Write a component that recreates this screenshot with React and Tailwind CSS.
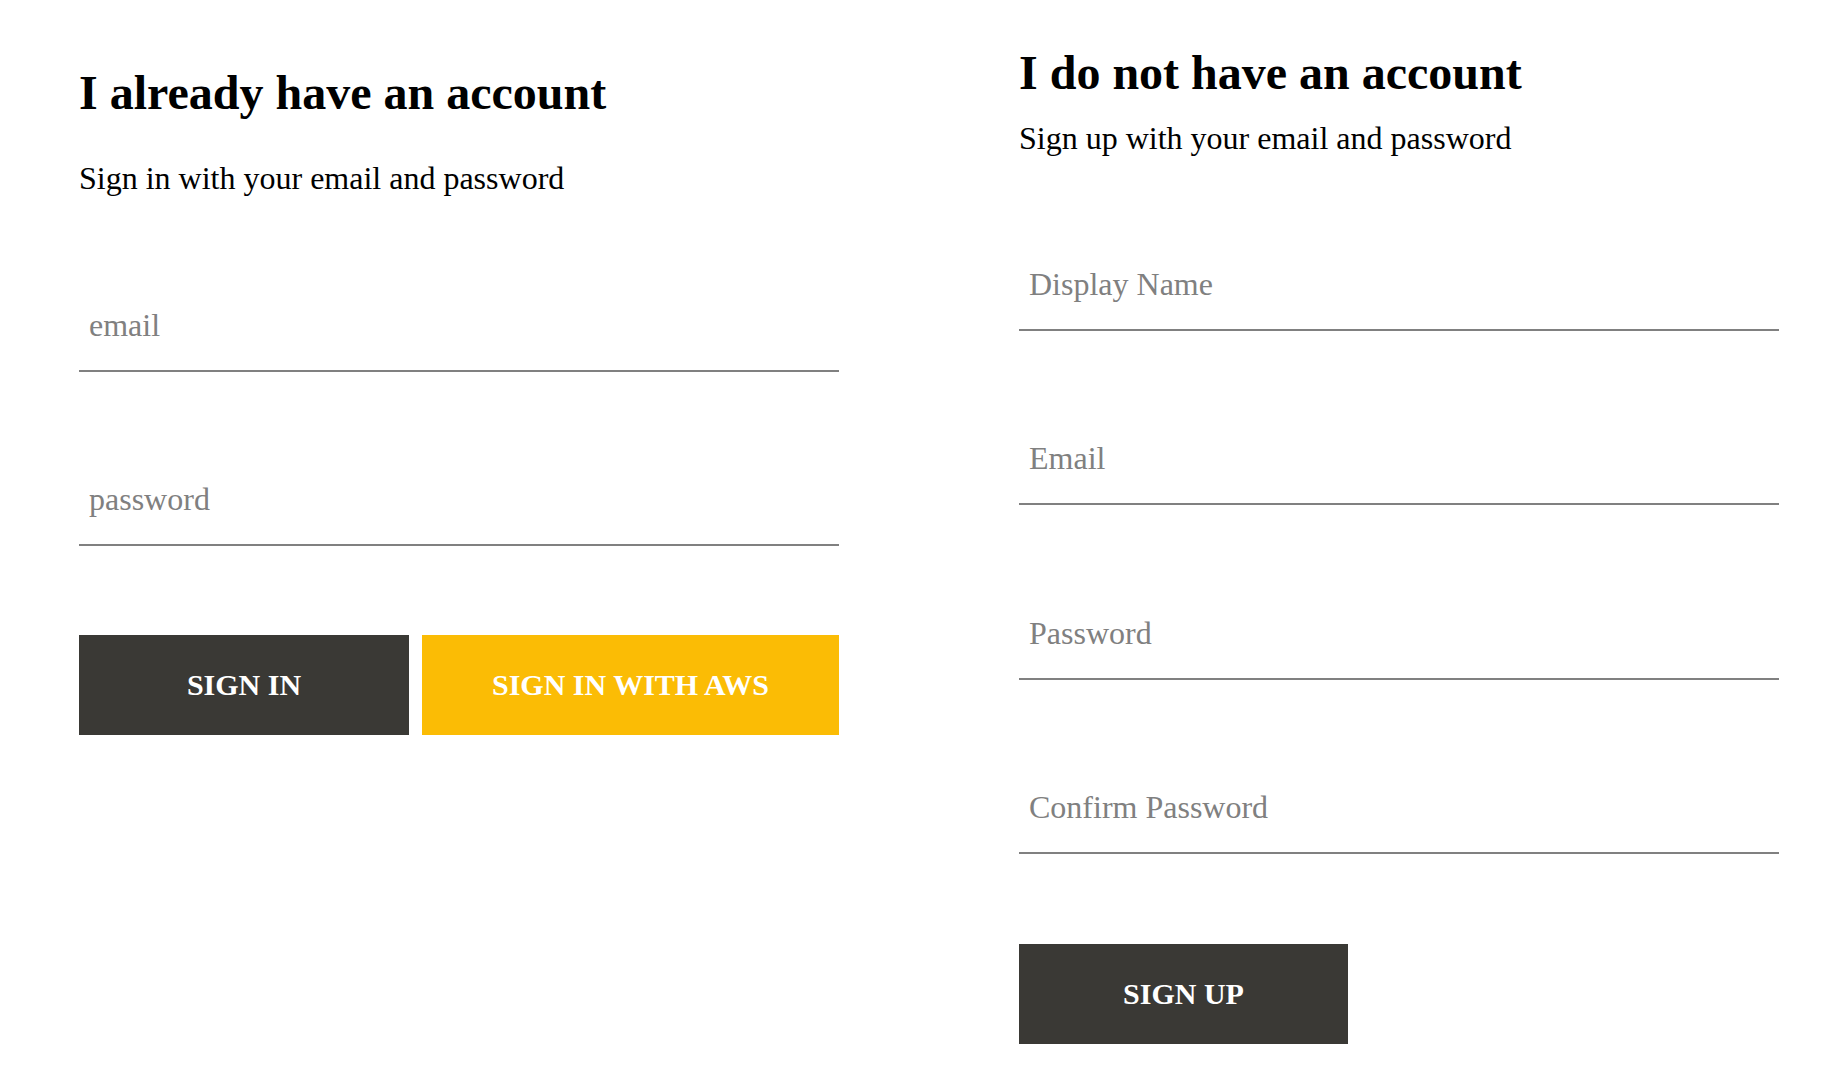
export default function App() {
  const input =
    "block w-full border-0 border-b-2 border-solid border-[#808080] bg-transparent pl-[10px] pr-[10px] pt-[17px] pb-[27px] text-[32px] leading-[36px] text-black outline-none placeholder:text-[#808080]";
  const btn =
    "flex h-[100px] items-center justify-center text-[30px] font-bold uppercase leading-none text-white";
  return (
    <div
      className="flex min-h-[1067px] w-full items-start bg-white pl-[79px]"
      style={{ fontFamily: '"Liberation Serif", "Times New Roman", serif' }}
    >
      {/* Sign in */}
      <div className="flex w-[760px] flex-col">
        <h2 className="mt-[66px] text-[48px] font-bold leading-[53px] text-black">
          I already have an account
        </h2>
        <p className="mt-[41px] text-[32px] leading-[37px] text-black">
          Sign in with your email and password
        </p>
        <input className={`${input} mt-[93px]`} type="email" placeholder="email" />
        <input className={`${input} mt-[92px]`} type="password" placeholder="password" />
        <div className="mt-[89px] flex gap-[13px]">
          <button className={`${btn} w-[330px] bg-[#3a3935]`}>Sign in</button>
          <button className={`${btn} w-[417px] bg-[#fbbc05]`}>Sign in with AWS</button>
        </div>
      </div>

      {/* Sign up */}
      <div className="ml-[180px] flex w-[760px] flex-col">
        <h2 className="mt-[46px] text-[48px] font-bold leading-[53px] text-black">
          I do not have an account
        </h2>
        <p className="mt-[21px] text-[32px] leading-[37px] text-black">
          Sign up with your email and password
        </p>
        <input className={`${input} mt-[92px]`} type="text" placeholder="Display Name" />
        <input className={`${input} mt-[92px]`} type="email" placeholder="Email" />
        <input className={`${input} mt-[93px]`} type="password" placeholder="Password" />
        <input className={`${input} mt-[92px]`} type="password" placeholder="Confirm Password" />
        <div className="mt-[90px] flex">
          <button className={`${btn} w-[329px] bg-[#3a3935]`}>Sign up</button>
        </div>
      </div>
    </div>
  );
}
